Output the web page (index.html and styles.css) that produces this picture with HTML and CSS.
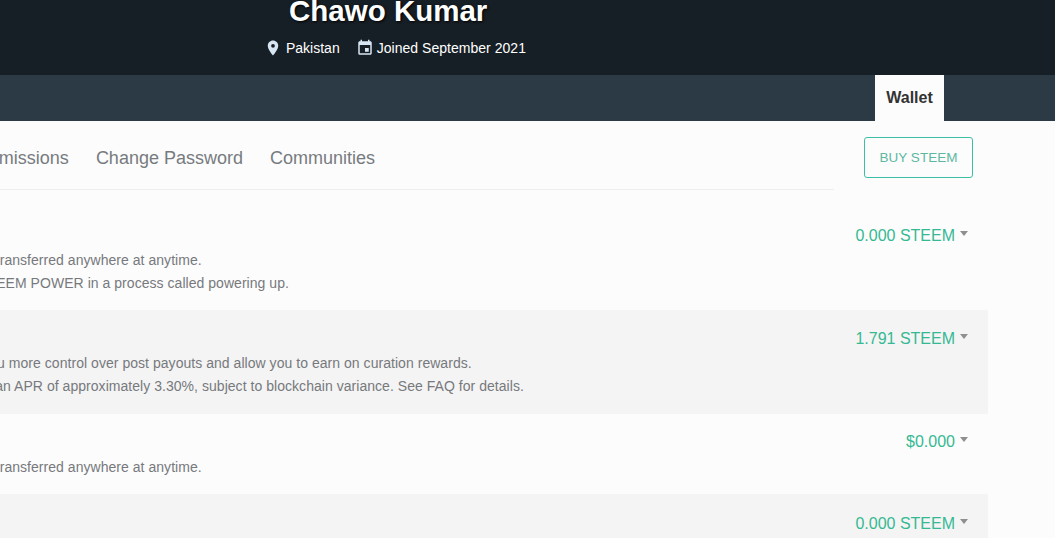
FILE: index.html
```html
<!DOCTYPE html>
<html lang="en">
<head>
<meta charset="utf-8">
<title>Chawo Kumar - Wallet</title>
<link rel="stylesheet" href="styles.css">
</head>
<body>
<header class="hero">
  <h1 class="hero-name">Chawo Kumar</h1>
  <div class="hero-meta">
    <span class="meta-item">
      <svg class="meta-icon" viewBox="0 0 24 24"><path d="M12 2C8.13 2 5 5.13 5 9c0 5.25 7 13 7 13s7-7.75 7-13c0-3.87-3.13-7-7-7zm0 9.5a2.5 2.5 0 1 1 0-5 2.5 2.5 0 0 1 0 5z"/></svg>
      <span class="meta-loc">Pakistan</span>
    </span>
    <span class="meta-item">
      <svg class="meta-icon" viewBox="0 0 24 24"><path d="M17 12h-5v5h5v-5zM16 1v2H8V1H6v2H5c-1.11 0-2 .9-2 2v14a2 2 0 0 0 2 2h14c1.1 0 2-.9 2-2V5c0-1.1-.9-2-2-2h-1V1h-2zm3 18H5V8h14v11z"/></svg>
      <span class="meta-date">Joined September 2021</span>
    </span>
  </div>
</header>
<nav class="topnav">
  <a class="topnav-tab">Wallet</a>
</nav>
<main class="wallet">
  <div class="wallet-head">
    <ul class="tabs">
      <li>Balances</li>
      <li>Permissions</li>
      <li>Change Password</li>
      <li>Communities</li>
    </ul>
    <a class="buy">BUY STEEM</a>
  </div>
  <section class="row row-first">
    <div class="row-text">
      <div class="row-title">STEEM</div>
      <p>Tradeable tokens that may be transferred anywhere at anytime.</p>
      <p>Steem can be converted to STEEM POWER in a process called powering up.</p>
    </div>
    <div class="amount">0.000 STEEM<i class="caret"></i></div>
  </section>
  <section class="row row-alt">
    <div class="row-text">
      <div class="row-title">STEEM POWER</div>
      <p>Influence tokens which give you more control over post payouts and allow you to earn on curation rewards.</p>
      <p>STEEM POWER increases at an APR of approximately 3.30%, subject to blockchain variance. See FAQ for details.</p>
    </div>
    <div class="amount">1.791 STEEM<i class="caret"></i></div>
  </section>
  <section class="row row-third">
    <div class="row-text">
      <div class="row-title">STEEM DOLLARS</div>
      <p>Tradeable tokens that may be transferred anywhere at anytime.</p>
    </div>
    <div class="amount">$0.000<i class="caret"></i></div>
  </section>
  <section class="row row-alt row-fourth">
    <div class="row-text">
      <div class="row-title">SAVINGS</div>
    </div>
    <div class="amount">0.000 STEEM<i class="caret"></i></div>
  </section>
</main>
</body>
</html>
```
FILE: styles.css
```css
html, body {
  margin: 0;
  padding: 0;
  height: 538px;
  overflow: hidden;
  background: #fcfcfc;
  font-family: "Liberation Sans", Arial, sans-serif;
}
.hero {
  height: 75px;
  box-sizing: border-box;
  background: #171f26;
  color: #fff;
  padding-left: 264px;
  overflow: hidden;
}
.hero-name {
  margin: -5px 0 0 25px;
  font-size: 29.5px;
  line-height: 32px;
  font-weight: 700;
  text-shadow: 1px 1px 3px #000;
  white-space: nowrap;
}
.hero-meta {
  display: flex;
  gap: 16px;
  margin-top: 12px;
  font-size: 14px;
  line-height: 16px;
}
.meta-item {
  display: flex;
  align-items: center;
  gap: 1px;
}
.meta-loc { margin-left: 3px; }
.meta-date { margin-left: 2px; letter-spacing: 0.03px; }
.meta-icon {
  width: 18px;
  height: 18px;
  fill: #d8e6f3;
  flex: none;
}
.topnav {
  height: 46px;
  background: #2c3a45;
  display: flex;
  justify-content: flex-end;
  padding-right: 111px;
}
.topnav-tab {
  width: 69px;
  background: #fcfcfc;
  color: #333;
  font-size: 16px;
  font-weight: 700;
  line-height: 46px;
  text-align: center;
}
.wallet {
  width: 1388px;
  margin-left: -400px;
}
.wallet-head {
  display: flex;
  align-items: flex-start;
  padding-top: 16px;
}
.tabs {
  list-style: none;
  margin: 0;
  padding: 0 459px 0 100px;
  width: 1234px;
  box-sizing: border-box;
  height: 53px;
  display: flex;
  justify-content: flex-end;
  gap: 27px;
  border-bottom: 1px solid #eeeeee;
  font-size: 18px;
  line-height: 43px;
  color: #777b7f;
  white-space: nowrap;
}
.buy {
  margin-left: 30px;
  width: 109px;
  height: 41px;
  box-sizing: border-box;
  border: 1px solid #3dbfa5;
  border-radius: 3px;
  color: #5cb8a2;
  font-size: 13.5px;
  line-height: 39px;
  text-align: center;
}
.row {
  display: flex;
  justify-content: space-between;
  height: 80px;
  box-sizing: border-box;
  padding: 17px 19px 0 206px;
}
.row-first {
  height: 103px;
  margin-top: 17px;
}
.row-alt {
  background: #f4f4f4;
}
.row-first + .row-alt { height: 104px; }
.row-third { padding-top: 16px; }
.row-third .row-text { margin-top: 1px; }
.row-fourth { padding-top: 18px; }
.row-text {
  color: #77797d;
  font-size: 14px;
  line-height: 23px;
  letter-spacing: 0.04px;
}
.row-text p { margin: 0; white-space: nowrap; }
.row-title {
  font-size: 16px;
  line-height: 24px;
  margin-bottom: 1px;
  color: #333;
}
.amount {
  position: relative;
  padding-right: 14px;
  color: #35b993;
  font-size: 16px;
  line-height: 24px;
  white-space: nowrap;
}
.caret {
  position: absolute;
  right: 1px;
  top: 7px;
  border-left: 4.5px solid transparent;
  border-right: 4.5px solid transparent;
  border-top: 5px solid #8f8f8f;
}
```
